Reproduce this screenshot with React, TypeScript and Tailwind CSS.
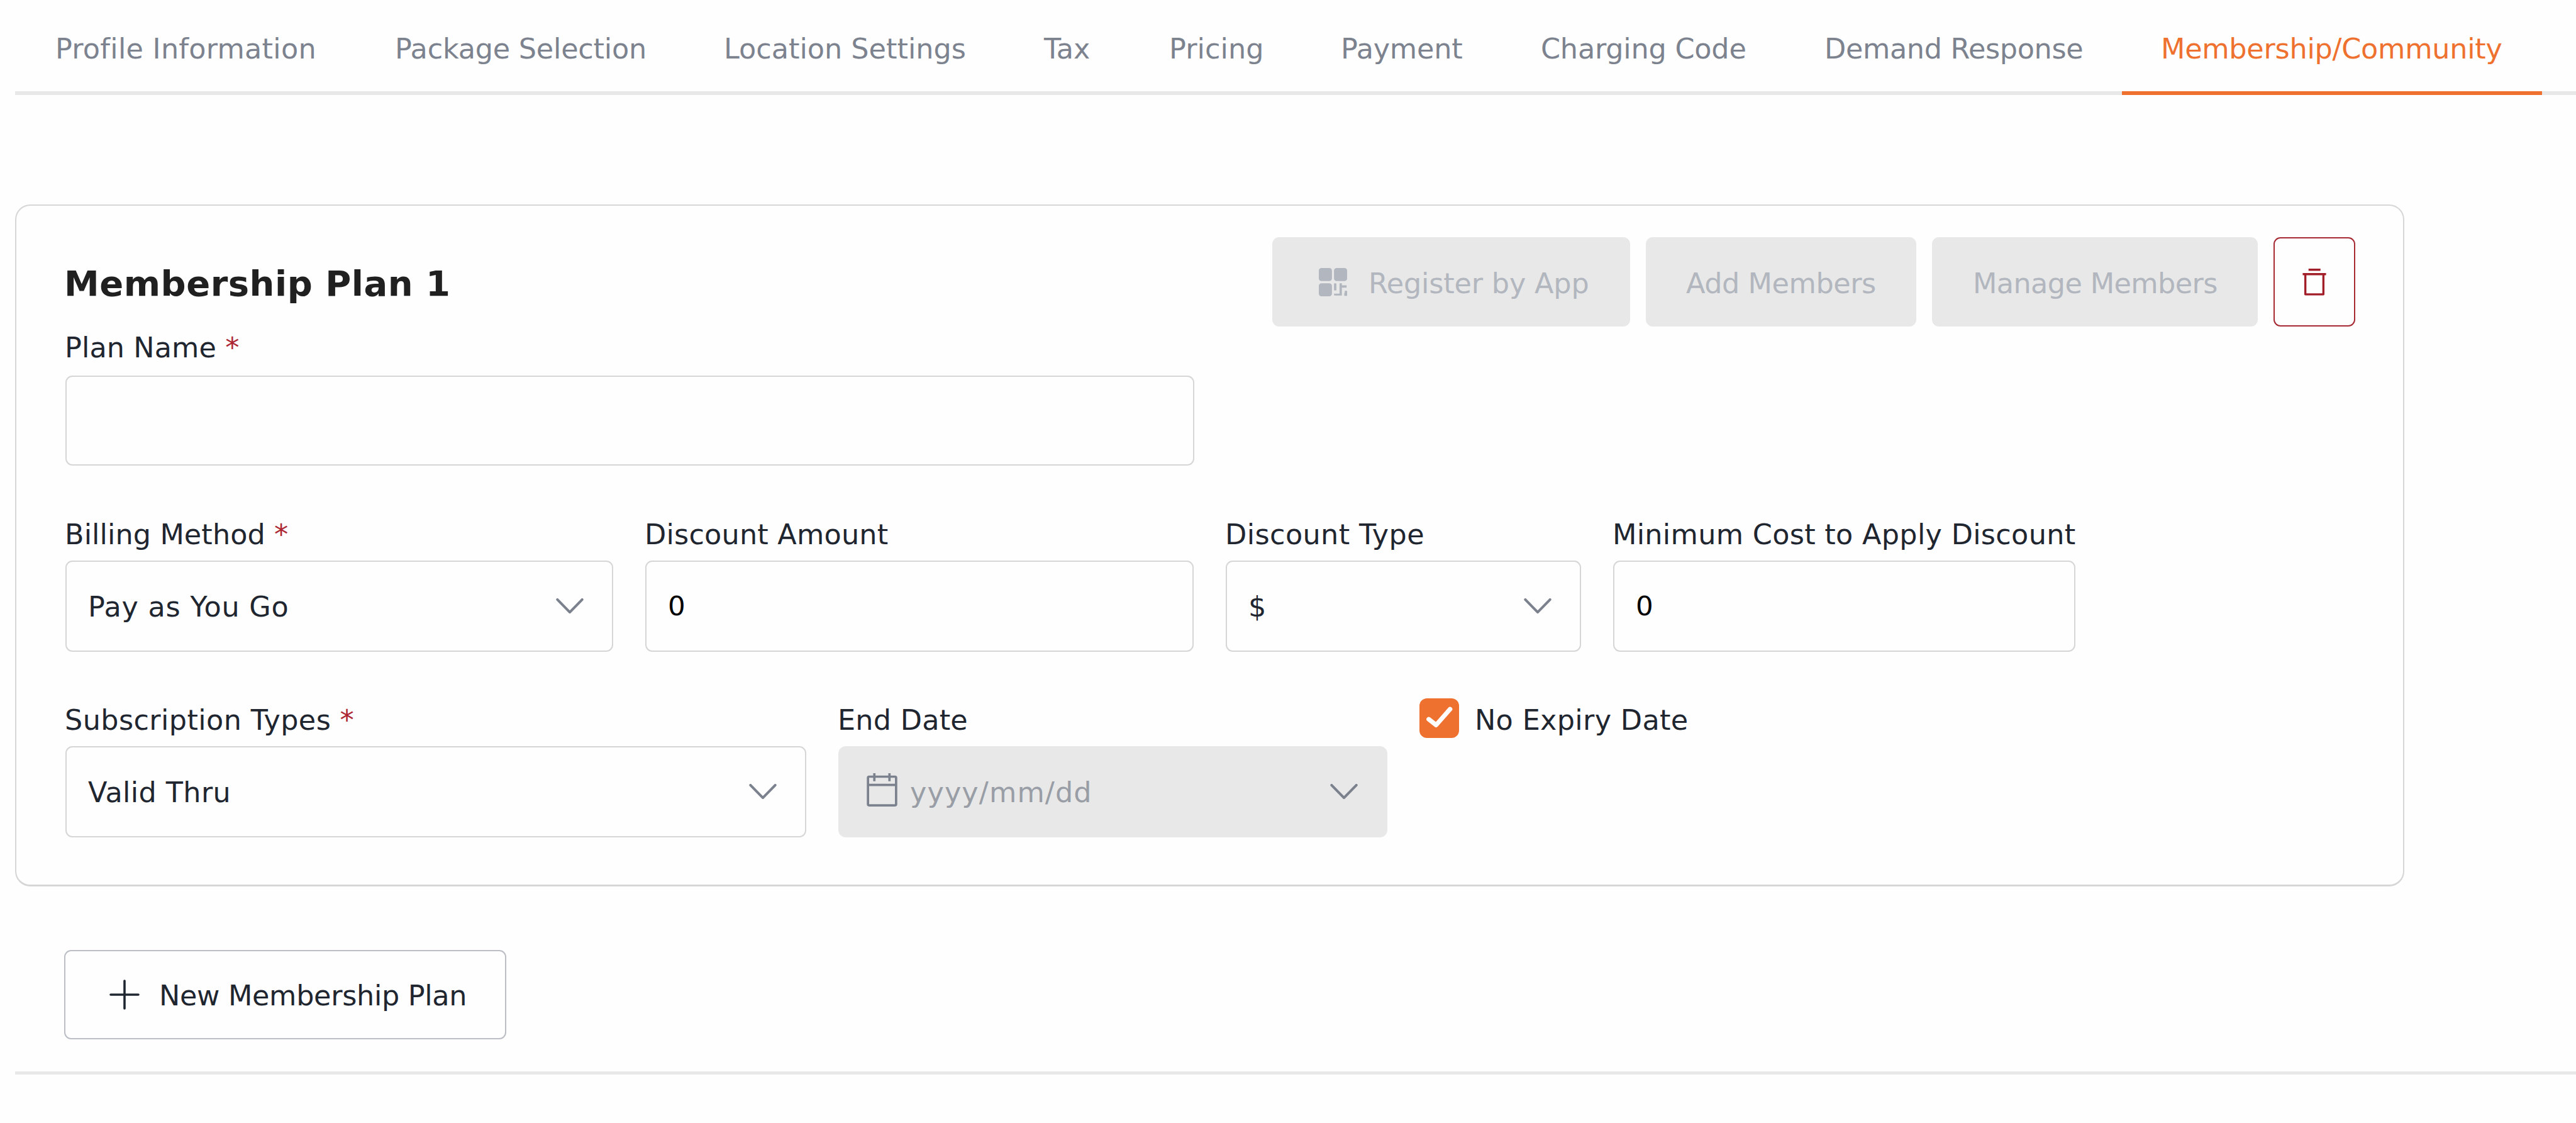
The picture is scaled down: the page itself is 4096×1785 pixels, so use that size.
import React from 'react';

type Tab = { label: string; box: string };

const TABS: Tab[] = [
  { label: 'Profile Information', box: 'w-[540px] tracking-[0.25px]' },
  { label: 'Package Selection', box: 'w-[523px] tracking-[-0.22px]' },
  { label: 'Location Settings', box: 'w-[509px]' },
  { label: 'Tax', box: 'w-[199px]' },
  { label: 'Pricing', box: 'w-[273px] tracking-[0.1px]' },
  { label: 'Payment', box: 'w-[318px] tracking-[-0.2px]' },
  { label: 'Charging Code', box: 'w-[451px] tracking-[-0.2px]' },
  { label: 'Demand Response', box: 'w-[535px] tracking-[-0.35px]' },
];

function ChevronDown() {
  return (
    <svg className="h-[25px] w-[44px] shrink-0" viewBox="0 0 52 30" fill="none" stroke="#7b818d" strokeWidth="5" strokeLinecap="round" strokeLinejoin="round">
      <path d="M2.5 2.5 26 26.5 49.5 2.5" />
    </svg>
  );
}

function QrIcon() {
  return (
    <svg className="h-[45px] w-[45px] shrink-0" viewBox="0 0 54 54" fill="#b2b6be">
      <rect x="0" y="0" width="25" height="25" rx="5" />
      <rect x="29" y="0" width="25" height="25" rx="5" />
      <rect x="0" y="29" width="25" height="25" rx="5" />
      <rect x="29" y="29" width="4.5" height="14" rx="1.5" />
      <path d="M39.5 29h4.5v4h9v4.5h-9V52.500H30.500a1.500 1.500 0 0 1-1.500-1.500v-2h10.500z" />
      <path d="M49.500 43.500H54V53h-5.500v-5.500h1z" />
    </svg>
  );
}

function TrashIcon() {
  return (
    <svg className="h-[44px] w-[38px]" viewBox="0 0 45 52" fill="none" stroke="#a21f2a" strokeWidth="4">
      <path d="M11.500 3.200h22.500M.5 11.500h44" />
      <path d="M5.500 11.500v38h34v-38" strokeLinejoin="round" />
    </svg>
  );
}

function CalendarIcon() {
  return (
    <svg className="h-[54px] w-[49px] shrink-0" viewBox="0 0 58 64" fill="none" stroke="#7b828e" strokeWidth="4.4">
      <rect x="2.500" y="6.500" width="53" height="54" rx="2" />
      <path d="M2.500 22h53M14.500 0v15M43 0v15" />
    </svg>
  );
}

function CheckIcon() {
  return (
    <svg className="h-[63px] w-[63px]" viewBox="0 0 75 75" fill="none" stroke="#fff" strokeWidth="8.5" strokeLinecap="round" strokeLinejoin="round">
      <path d="M17.500 39.500 31.500 50.500 58 20.500" />
    </svg>
  );
}

function Label({ text, required, tracking }: { text: string; required?: boolean; tracking: string }) {
  return (
    <label className="-ml-[1px] block h-[50px] leading-[51px] whitespace-nowrap text-[#1f2630]">
      <span className={tracking}>{text}</span>
      {required && <span className="text-[#ad2733]"> *</span>}
    </label>
  );
}

function Select({ value, tracking }: { value: string; tracking: string }) {
  return (
    <div className="mt-[17px] flex h-[145px] items-center justify-between rounded-[11px] border-2 border-[#d6d6d6] pr-[45px] pl-[34px] text-[#1f2630]">
      <span className={`pt-[3px] ${tracking}`}>{value}</span>
      <ChevronDown />
    </div>
  );
}

function NumberBox({ value }: { value: string }) {
  return (
    <input
      className="mt-[17px] block h-[145px] w-full rounded-[11px] border-2 border-[#d6d6d6] bg-transparent pb-[2px] pl-[34px] text-[43.5px] text-black"
      defaultValue={value}
    />
  );
}

export default function App() {
  return (
    <div className="h-[1785px] w-[4096px] overflow-hidden bg-[#fefefe] pl-[24px] font-['DejaVu_Sans',sans-serif] text-[44.5px] text-[#1f2630]">
      <nav className="flex h-[151px] border-b-[6px] border-[#e8e8e8] pl-[2px] text-[#7c838f]">
        {TABS.map((t) => (
          <a key={t.label} className={`shrink-0 pt-[9px] pl-[62px] leading-[137px] whitespace-nowrap ${t.box}`}>
            {t.label}
          </a>
        ))}
        <a className="h-[151px] w-[668px] shrink-0 border-b-[6px] border-[#ee712f] pt-[9px] pl-[62px] leading-[137px] tracking-[-0.25px] whitespace-nowrap text-[#ee712f]">
          Membership/Community
        </a>
      </nav>

      <section className="mt-[174px] h-[1084px] w-[3799px] rounded-[24px] border-2 border-b-[3px] border-[#d6d6d6] pt-[50px] pl-[78px]">
        <header className="flex h-[142px] items-center justify-between pr-[76px]">
          <h2 className="-ml-[2px] pt-[5px] text-[56px] leading-[64px] font-bold tracking-[0.5px] text-[#202020]">Membership Plan 1</h2>
          <div className="flex h-full gap-[25px] text-[#b2b6be]">
            <button className="flex w-[569px] items-center rounded-[11px] bg-[#e8e8e8] pl-[74px] tracking-[-0.17px]">
              <QrIcon />
              <span className="ml-[34px] pt-[7px] whitespace-nowrap">Register by App</span>
            </button>
            <button className="flex w-[430px] items-center rounded-[11px] bg-[#e8e8e8] pl-[64px] tracking-[-0.43px]">
              <span className="pt-[7px] whitespace-nowrap">Add Members</span>
            </button>
            <button className="flex w-[518px] items-center rounded-[11px] bg-[#e8e8e8] pl-[65px] tracking-[-0.6px]">
              <span className="pt-[7px] whitespace-nowrap">Manage Members</span>
            </button>
            <button className="flex w-[130px] items-center justify-center rounded-[11px] border-2 border-[#a62a34]">
              <TrashIcon />
            </button>
          </div>
        </header>

        <div className="mt-[8px] w-[1795px]">
          <Label text="Plan Name" required tracking="tracking-[0.1px]" />
          <input className="mt-[20px] block h-[143px] w-full rounded-[11px] border-2 border-[#d6d6d6] bg-transparent" />
        </div>

        <div className="mt-[84px] flex gap-[51px]">
          <div className="w-[871px]">
            <Label text="Billing Method" required tracking="tracking-[0.1px]" />
            <Select value="Pay as You Go" tracking="tracking-[0.75px]" />
          </div>
          <div className="w-[872px]">
            <Label text="Discount Amount" tracking="tracking-[0.2px]" />
            <NumberBox value="0" />
          </div>
          <div className="w-[565px]">
            <Label text="Discount Type" tracking="tracking-[0.4px]" />
            <Select value="$" tracking="" />
          </div>
          <div className="w-[735px]">
            <Label text="Minimum Cost to Apply Discount" tracking="tracking-[0.3px]" />
            <NumberBox value="0" />
          </div>
        </div>

        <div className="mt-[83px] flex gap-[51px]">
          <div className="w-[1178px]">
            <Label text="Subscription Types" required tracking="tracking-[0.4px]" />
            <Select value="Valid Thru" tracking="tracking-[0.39px]" />
          </div>
          <div className="w-[873px]">
            <Label text="End Date" tracking="tracking-[0.23px]" />
            <div className="mt-[17px] flex h-[145px] items-center rounded-[12px] bg-[#e8e8e8] pr-[47px] pl-[45px]">
              <span className="pb-[6px]">
                <CalendarIcon />
              </span>
              <span className="ml-[20px] grow pt-[3px] tracking-[1.12px] text-[#989da6]">yyyy/mm/dd</span>
              <ChevronDown />
            </div>
          </div>
          <div className="-mt-[9px] flex h-[63px] items-center">
            <span className="size-[63px] rounded-[12px] bg-[#ee712f]">
              <CheckIcon />
            </span>
            <span className="ml-[25px] pt-[6px] leading-[50px] tracking-[0.33px] whitespace-nowrap">No Expiry Date</span>
          </div>
        </div>
      </section>

      <button className="mt-[101px] ml-[78px] flex h-[142px] w-[703px] items-center rounded-[11px] border-2 border-[#bbbec5] pl-[70px] tracking-[-0.31px]">
        <svg className="h-[48px] w-[48px] shrink-0" viewBox="0 0 48 48" stroke="#1f2630" strokeWidth="3.6" strokeLinecap="round">
          <path d="M24 2v44M2 24h44" />
        </svg>
        <span className="ml-[31px] pt-[4px] whitespace-nowrap">New Membership Plan</span>
      </button>

      <hr className="mt-[51px] border-0 border-t-[5px] border-[#e8e8e8]" />
    </div>
  );
}
